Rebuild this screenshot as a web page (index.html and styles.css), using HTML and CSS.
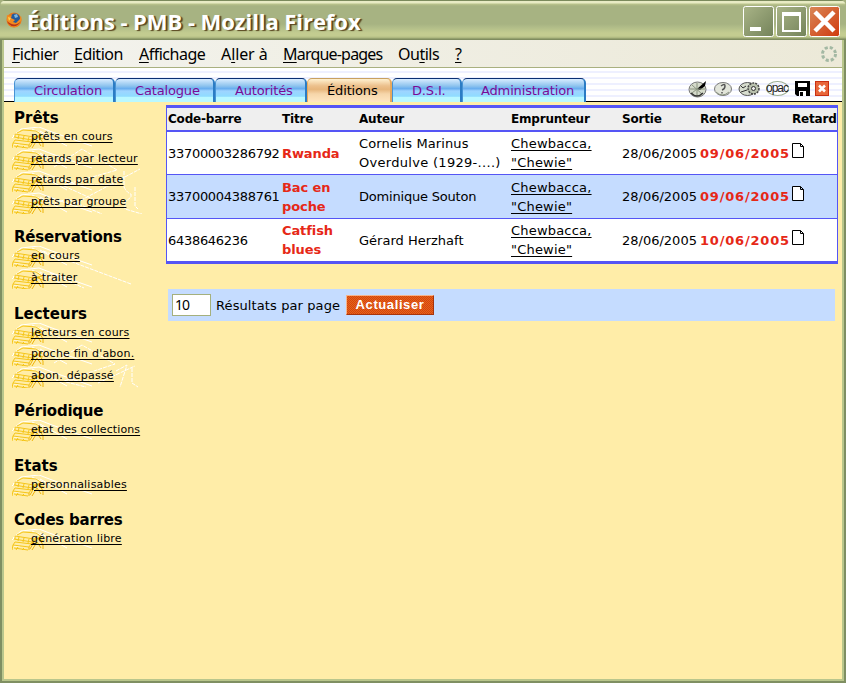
FILE: index.html
```
<!DOCTYPE html>
<html lang="fr">
<head>
<meta charset="utf-8">
<title>Éditions - PMB</title>
<link rel="stylesheet" href="styles.css">
</head>
<body>
<svg width="0" height="0" class="defs" aria-hidden="true">
  <defs>
    <linearGradient id="olive" x1="0" y1="0" x2="1" y2="1"><stop stop-color="#a9b487"/><stop offset="1" stop-color="#74835a"/></linearGradient>
    <linearGradient id="red" x1="0" y1="0" x2="1" y2="1"><stop stop-color="#d98858"/><stop offset="1" stop-color="#d03a0e"/></linearGradient>
    <g id="books" fill="none" stroke-width="1">
      <path stroke="#fff" d="M1 9L9 2L27 0L40 5L80 19M28 4L55 19M0 11L3 8M20 2L31 7M2 17H8"/>
      <path stroke="#f5c518" d="M5 6L11 3L24 4L30 8L22 10L3 7M2 10L20 13M3 7V10M22 10L20 15L3 13M3 13L1 16L17 18L22 10M1 16L0 21M2 19L16 21M4 21L6 18M10 21L12 19M7 8L6 12M12 9L11 13M17 10L16 14"/>
      <path stroke="#eeb408" d="M18 20L23 11L27 9L31 16V20M20 21L25 13L29 19M26 10L31 12M17 18V21"/>
    </g>
    <symbol id="doc" viewBox="0 0 12 15"><path d="M.5.5H8.5L11.5 3.5V14.5H.5ZM8.5.5V3.5H11.5" fill="#fff" stroke="#000"/></symbol>
  </defs>
</svg>
<div class="window">
  <header class="titlebar">
    <svg class="fox" width="16" height="16" viewBox="0 0 16 16"><circle cx="8" cy="8" r="7.500" fill="#e8791a"/><circle cx="9" cy="6.500" r="5" fill="#245a9c"/><path d="M8 3L11 2L12 5L9 6Z" fill="#7db7df"/><path d="M1 3L4 4L6 3L5 6L9 8L7 10L10 11L14 7L15 4C17 11 12 16 7 15C2 14 0 9 1 3Z" fill="#f28b20"/><path d="M1 9C3 15 11 17 15 9C12 13 6 14 1 9Z" fill="#b83418"/><path d="M2 5L5 6L3 9Z" fill="#ffd04a"/></svg>
    <h1>Éditions - PMB - Mozilla Firefox</h1>
    <div class="controls">
      <svg class="ctl" viewBox="0 0 31 31"><rect class="ctl-box" x=".5" y=".5" width="30" height="30" rx="2"/><path d="M7 21H18V25H7Z" fill="#fff"/></svg>
      <svg class="ctl" viewBox="0 0 31 31"><rect class="ctl-box" x=".5" y=".5" width="30" height="30" rx="2"/><path d="M6 6H25V26H6ZM8 10V24H23V10Z" fill="#fff" fill-rule="evenodd"/></svg>
      <svg class="ctl" viewBox="0 0 31 31"><rect class="ctl-box close" x=".5" y=".5" width="30" height="30" rx="2"/><path d="M6 6L25 25M25 6L6 25" stroke="#fff" stroke-width="4.500"/></svg>
    </div>
  </header>
  <nav class="menubar">
    <span class="m1"><u>F</u>ichier</span><span class="m2"><u>E</u>dition</span><span class="m3"><u>A</u>ffichage</span><span class="m4">A<u>l</u>ler à</span><span class="m5"><u>M</u>arque-pages</span><span class="m6">Ou<u>t</u>ils</span><span class="m7"><u>?</u></span>
    <svg class="throbber" width="18" height="18" viewBox="0 0 18 18"><circle cx="9" cy="9" r="6.500" fill="none" stroke="#a3b8a3" stroke-width="3" stroke-dasharray="3.100 2"/></svg>
  </nav>
  <div class="tabbar">
    <div class="tabs">
      <a class="tab t1">Circulation</a><a class="tab t2">Catalogue</a><a class="tab t3">Autorités</a><a class="tab t4 active">Éditions</a><a class="tab t5">D.S.I.</a><a class="tab t6">Administration</a>
    </div>
    <div class="tools">
      <svg width="20" height="18" viewBox="0 0 20 18"><ellipse cx="9.500" cy="9.500" rx="8.500" ry="7.500" fill="#d5dacb" stroke="#777"/><path d="M9 9L18 1L17 6L12 10Z" fill="#000"/><path d="M4 5L14 14M4 13L9 9M9 3V16M2 9H17" stroke="#8a947e"/><path d="M3 13Q9 19 15 13" stroke="#333" fill="none" stroke-width="1.500"/></svg>
      <svg width="20" height="18" viewBox="0 0 20 18"><ellipse cx="10" cy="9" rx="8.500" ry="6.500" fill="#e2e5da" stroke="#777"/><path d="M8 6Q12 3 12 6T9 10M9 12V13.500" fill="none" stroke="#555" stroke-width="1.500"/><path d="M3 12Q9 18 16 12" stroke="#8a9480" fill="none"/></svg>
      <svg width="23" height="18" viewBox="0 0 23 18"><ellipse cx="9.500" cy="9" rx="8.500" ry="6.500" fill="#d7ddce" stroke="#555"/><circle cx="15.500" cy="8.500" r="5.500" fill="#b9c1ae" stroke="#444" stroke-width="1.500" stroke-dasharray="2 1"/><circle cx="15.500" cy="8.500" r="2" fill="#eee" stroke="#333"/><path d="M3 6L5 8L8 6M3 12L9 10" stroke="#333" fill="none"/></svg>
      <span class="opac">opac</span>
      <svg width="15" height="16" viewBox="0 0 15 16"><path d="M0 0H15V15H2L0 13Z" fill="#000"/><path d="M3 2H12V6H3ZM4 10H11V15H4Z" fill="#fff"/><path d="M5 11H8V15H5Z" fill="#000"/></svg>
      <svg width="14" height="15" viewBox="0 0 14 15"><rect width="14" height="15" fill="#e8663a"/><rect x=".5" y=".5" width="13" height="14" fill="none" stroke="#c92f12"/><path d="M4 4.500L10 10.500M10 4.500L4 10.500" stroke="#fff" stroke-width="2.500"/></svg>
    </div>
  </div>
  <div class="page">
    <aside>
      <section><h2 class="w1">Prêts</h2><div class="links">
        <svg class="art" width="142" height="87" viewBox="0 0 142 87"><path d="M42 40L70 22L105 43L52 58H105M52 59L96 79M60 78L128 42M112 44V60Q115 66 119 67V70L113 75V82L130 87M123 60V79L126 82M43 76L55 72L90 87" fill="none" stroke="#fff" stroke-dasharray="4 1"/><use href="#books"/><use href="#books" y="22"/><use href="#books" y="44"/><use href="#books" y="66"/></svg>
        <a>prêts en cours</a><a>retards par lecteur</a><a>retards par date</a><a>prêts par groupe</a></div></section>
      <section><h2 class="tight">Réservations</h2><div class="links">
        <svg class="art" width="142" height="43" viewBox="0 0 142 43"><path d="M31 5L119 38M38 27L72 42" fill="none" stroke="#fff" stroke-dasharray="4 1"/><use href="#books"/><use href="#books" y="22"/></svg>
        <a>en cours</a><a>à traiter</a></div></section>
      <section><h2>Lecteurs</h2><div class="links">
        <svg class="art" width="142" height="65" viewBox="0 0 142 65"><path d="M42 40L70 22L103 41L52 58H92M54 59L74 64M86 60L123 43M104 48L115 42L108 64M120 45V60L126 64" fill="none" stroke="#fff" stroke-dasharray="4 1"/><use href="#books"/><use href="#books" y="22"/><use href="#books" y="44"/></svg>
        <a>lecteurs en cours</a><a>proche fin d'abon.</a><a>abon. dépassé</a></div></section>
      <section><h2 class="tight">Périodique</h2><div class="links"><svg class="art" width="142" height="22"><use href="#books"/></svg><a class="narrow">etat des collections</a></div></section>
      <section><h2>Etats</h2><div class="links"><svg class="art" width="142" height="22"><use href="#books"/></svg><a>personnalisables</a></div></section>
      <section><h2 class="tight">Codes barres</h2><div class="links"><svg class="art" width="142" height="22"><use href="#books"/></svg><a>génération libre</a></div></section>
    </aside>
    <main>
      <div class="loans">
        <div class="row head"><b>Code-barre</b><b>Titre</b><b>Auteur</b><b>Emprunteur</b><b>Sortie</b><b>Retour</b><b>Retard</b></div>
        <div class="row first"><span class="code">33700003286792</span><strong>Rwanda</strong><span class="author">Cornelis Marinus<br><span class="dated">Overdulve (1929-....)</span></span><a>Chewbacca,<br>"Chewie"</a><span>28/06/2005</span><strong class="due">09/06/2005</strong><svg class="doc"><use href="#doc"/></svg></div>
        <div class="row blue"><span class="code">33700004388761</span><strong>Bac en<br>poche</strong><span class="dense">Dominique Souton</span><a>Chewbacca,<br>"Chewie"</a><span>28/06/2005</span><strong class="due">09/06/2005</strong><svg class="doc"><use href="#doc"/></svg></div>
        <div class="row last"><span class="code">6438646236</span><strong>Catfish<br>blues</strong><span>Gérard Herzhaft</span><a>Chewbacca,<br>"Chewie"</a><span>28/06/2005</span><strong class="due">10/06/2005</strong><svg class="doc"><use href="#doc"/></svg></div>
      </div>
      <form class="pager"><input value="10" aria-label="Résultats par page"><label>Résultats par page</label><button type="button">Actualiser</button></form>
    </main>
  </div>
</div>
</body>
</html>
```
FILE: styles.css
```
* { box-sizing: border-box; }
body { margin: 0; background: #a5b07d; color: #000; font: 13px/19px "DejaVu Sans", sans-serif; overflow: hidden; }
.defs { position: absolute; }
.window { width: 846px; height: 683px; display: flex; flex-direction: column; padding: 0 4px 4px; background: #b9c68c; border-radius: 6px 6px 0 0; box-shadow: inset 0 0 0 2px #7f8f62; }
.titlebar { height: 40px; flex: none; margin: 0 -4px; padding: 0 6px; display: flex; align-items: center; border-radius: 6px 6px 0 0; background: linear-gradient(#7b8a5c 0 1px, #e8ebc4 1px 3px, #bac48c 4px, #a7b382 6px 24px, #b0bc88 27px, #c3cc90 33px 36px, #a9b47c 38px, #7f8c5f 39px); }
.fox { flex: none; }
h1 { margin: 2px 0 0 5px; flex: 1; color: #fff; font: bold 22px/30px "Open Sans", sans-serif; letter-spacing: -.06px; white-space: nowrap; text-shadow: 2px 1px 1px #58451f; }
.controls { display: flex; gap: 2px; margin-top: 3px; }
.ctl { width: 31px; height: 31px; }
.ctl-box { fill: url(#olive); stroke: #fff; }
.close { fill: url(#red); }
.menubar { height: 28px; flex: none; display: flex; align-items: center; padding-left: 8px; background: linear-gradient(90deg, #f3f3ee, #ece9d8); border-bottom: 1px solid #a9b07f; font: 16px/22px "Noto Sans", sans-serif; letter-spacing: -.5px; white-space: nowrap; }
.menubar span { flex: none; }
.menubar u { text-underline-offset: 2px; text-decoration-thickness: 1px; }
.m1 { width: 62px; } .m2 { width: 65px; } .m3 { width: 82px; } .m4 { width: 62px; letter-spacing: -.1px; } .m5 { width: 115px; letter-spacing: -.8px; } .m6 { width: 57px; }
.throbber { margin-left: auto; margin-right: 4px; }
.tabbar { height: 34px; flex: none; display: flex; align-items: flex-end; justify-content: space-between; padding: 0 13px 0 10px; border-bottom: 1px solid #000; background: repeating-linear-gradient(#fff 0 3px, #eef0ff 3px 5px, #fff 5px 6px); }
.tabs { display: flex; margin-bottom: -1px; }
.tab { height: 24px; display: flex; align-items: center; padding-left: 19px; border: solid #0a2f72; border-width: 1px 1px 0; border-right: 2px solid #2b7cc4; border-left-color: #4793d4; border-radius: 5px 5px 0 0; background: linear-gradient(#d8ecff, #8fc4ee 30%, #68adef 42%, #9ed4ff 52%, #8fdcff 75%, #baf8ff 80%); color: #7a0b96; letter-spacing: -.15px; white-space: nowrap; }
.t1 { width: 101px; } .t2 { width: 100px; } .t3 { width: 92px; } .t4 { width: 85px; } .t5 { width: 70px; } .t6 { width: 124px; padding-left: 18px; }
.active { color: #000; border-color: #e8a95c; border-top-color: #c8a060; background: linear-gradient(#fff1d0, #ecc08c 30%, #e7b67c 45%, #f6d6aa 65%, #ffe6c0); }
.tools { display: flex; align-items: center; height: 25px; }
.tools svg, .opac { flex: none; }
.tools svg { margin-right: 5px; }
.opac { width: 23px; margin-right: 6px; color: #222; font: 12px/13px "Liberation Sans", sans-serif; letter-spacing: -1px; border: 1px solid #9cae94; border-radius: 50%; text-indent: -1px; }
.tools svg:last-child { margin-right: 0; }
.page { flex: 1; min-height: 0; display: flex; background: #ffeda8; }
aside { width: 162px; padding: 5px 0 0 10px; }
section { margin-bottom: 13.700px; }
h2 { margin: 0; height: 19px; font: bold 15px/22px "DejaVu Sans", sans-serif; white-space: nowrap; }
.tight { letter-spacing: -.22px; }
.links { position: relative; padding-left: 17px; }
.links a { display: block; position: relative; height: 21.700px; font-size: 11px; line-height: 22px; letter-spacing: .21px; text-decoration: underline; text-underline-offset: 2px; white-space: nowrap; }
.links .narrow { letter-spacing: .1px; }
.art { position: absolute; left: -2px; top: 1px; }
main { padding-top: 3px; }
.loans { width: 672px; border: 1px solid #5555f5; border-top-width: 3px; background: #fff; }
.row { display: grid; grid-template-columns: 114px 77px 152px 111px 78px 92px 44px; align-items: center; height: 44px; padding-left: 1px; border-bottom: 1px solid #5555f5; white-space: nowrap; }
.head { height: 24px; border-bottom-width: 2px; background: #efefef; font-size: 12px; letter-spacing: -.2px; }
.first { height: 43px; }
.blue { background: #c5dcff; }
.last { border-bottom-width: 2px; }
.row strong { color: #e62817; letter-spacing: -.1px; }
.row .due { letter-spacing: .8px; }
.code { letter-spacing: -.3px; }
.author { letter-spacing: .1px; }
.dated { letter-spacing: .3px; }
.dense { letter-spacing: -.2px; }
.row a { letter-spacing: .2px; text-decoration: underline; text-underline-offset: 2px; }
.doc { width: 12px; height: 15px; position: relative; top: -3px; }
.pager { margin: 25px 0 0 2px; width: 667px; height: 32px; display: flex; align-items: center; padding-left: 4px; background: #c5dcff; }
input { width: 39px; height: 22px; border: 1px solid #a5b07d; padding: 0 2px 2px; font: 14px "Noto Sans", sans-serif; letter-spacing: -1px; }
label { width: 125px; margin: 0 0 0 5px; letter-spacing: .1px; white-space: nowrap; }
button { width: 88px; height: 20px; margin-left: 5px; padding: 0; border: 1px solid #a6340c; border-top-color: #f5b48d; border-left-color: #f5b48d; background: repeating-conic-gradient(#d9400c 0 25%, #e0681c 0 50%) 0 0 / 2px 2px; color: #fff; font: bold 13px/16px "Liberation Sans", sans-serif; letter-spacing: .6px; }
```
